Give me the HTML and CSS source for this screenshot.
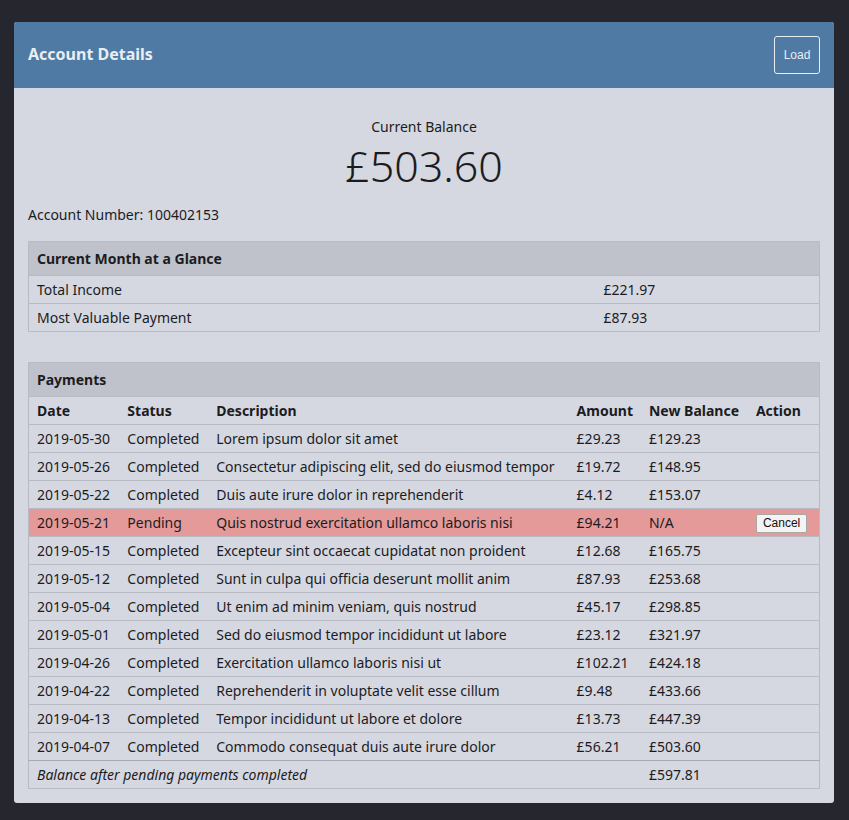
FILE: index.html
```html
<!DOCTYPE html>
<html>
<head>
<meta charset="utf-8">
<link rel="stylesheet" href="styles.css">
</head>
<body>
<div class="card">
  <div class="card-header">
    <h1 class="title">Account Details</h1>
    <button class="load-btn">Load</button>
  </div>
  <div class="card-body">
    <div class="balance">
      <div class="balance-label">Current Balance</div>
      <div class="balance-value">£503.60</div>
    </div>
    <div class="account-number">Account Number: 100402153</div>

    <table class="tbl glance">
      <thead>
        <tr><th colspan="2" class="caption">Current Month at a Glance</th></tr>
      </thead>
      <tbody>
        <tr><td class="g-label">Total Income</td><td>£221.97</td></tr>
        <tr><td class="g-label">Most Valuable Payment</td><td>£87.93</td></tr>
      </tbody>
    </table>

    <table class="tbl payments">
      <thead>
        <tr><th colspan="6" class="caption">Payments</th></tr>
        <tr class="cols">
          <th class="c-date">Date</th>
          <th class="c-status">Status</th>
          <th class="c-desc">Description</th>
          <th class="c-amt">Amount</th>
          <th class="c-bal">New Balance</th>
          <th class="c-act">Action</th>
        </tr>
      </thead>
      <tbody>
        <tr><td>2019-05-30</td><td>Completed</td><td>Lorem ipsum dolor sit amet</td><td>£29.23</td><td>£129.23</td><td></td></tr>
        <tr><td>2019-05-26</td><td>Completed</td><td>Consectetur adipiscing elit, sed do eiusmod tempor</td><td>£19.72</td><td>£148.95</td><td></td></tr>
        <tr><td>2019-05-22</td><td>Completed</td><td>Duis aute irure dolor in reprehenderit</td><td>£4.12</td><td>£153.07</td><td></td></tr>
        <tr class="pending"><td>2019-05-21</td><td>Pending</td><td>Quis nostrud exercitation ullamco laboris nisi</td><td>£94.21</td><td>N/A</td><td><button class="cancel-btn">Cancel</button></td></tr>
        <tr><td>2019-05-15</td><td>Completed</td><td>Excepteur sint occaecat cupidatat non proident</td><td>£12.68</td><td>£165.75</td><td></td></tr>
        <tr><td>2019-05-12</td><td>Completed</td><td>Sunt in culpa qui officia deserunt mollit anim</td><td>£87.93</td><td>£253.68</td><td></td></tr>
        <tr><td>2019-05-04</td><td>Completed</td><td>Ut enim ad minim veniam, quis nostrud</td><td>£45.17</td><td>£298.85</td><td></td></tr>
        <tr><td>2019-05-01</td><td>Completed</td><td>Sed do eiusmod tempor incididunt ut labore</td><td>£23.12</td><td>£321.97</td><td></td></tr>
        <tr><td>2019-04-26</td><td>Completed</td><td>Exercitation ullamco laboris nisi ut</td><td>£102.21</td><td>£424.18</td><td></td></tr>
        <tr><td>2019-04-22</td><td>Completed</td><td>Reprehenderit in voluptate velit esse cillum</td><td>£9.48</td><td>£433.66</td><td></td></tr>
        <tr><td>2019-04-13</td><td>Completed</td><td>Tempor incididunt ut labore et dolore</td><td>£13.73</td><td>£447.39</td><td></td></tr>
        <tr><td>2019-04-07</td><td>Completed</td><td>Commodo consequat duis aute irure dolor</td><td>£56.21</td><td>£503.60</td><td></td></tr>
      </tbody>
      <tfoot>
        <tr><td colspan="4" class="foot-label">Balance after pending payments completed</td><td>£597.81</td><td></td></tr>
      </tfoot>
    </table>
  </div>
</div>
</body>
</html>
```

FILE: styles.css
```css
html, body {
  margin: 0;
  padding: 0;
}
body {
  background: #25262e;
  font-family: "Noto Sans", "DejaVu Sans", sans-serif;
  font-size: 14px;
  color: #1c1c1e;
  padding: 22px 15px 17px 14px;
}
.card {
  width: 820px;
  background: #d5d8e1;
  border-radius: 3px;
  overflow: hidden;
}
.card-header {
  height: 66px;
  background: #4e7aa3;
  display: flex;
  align-items: center;
  justify-content: space-between;
  padding: 0 14px 1px 14px;
  box-sizing: border-box;
}
.title {
  margin: 0 0 1px 0;
  font-size: 16px;
  font-weight: 700;
  color: #e9eef5;
}
.load-btn {
  width: 46px;
  height: 38px;
  background: transparent;
  border: 1px solid #e9eef5;
  border-radius: 3px;
  color: #e9eef5;
  font-family: "Liberation Sans", Arial, sans-serif;
  font-size: 12px;
  padding: 0;
}
.card-body {
  padding: 29px 14px 14px 14px;
}
.balance {
  text-align: center;
}
.balance-label {
  font-size: 14px;
  line-height: 20px;
}
.balance-value {
  font-size: 43px;
  font-weight: 300;
  line-height: 58px;
}
.account-number {
  margin-top: 10px;
  line-height: 20px;
}
.tbl {
  width: 100%;
  border-collapse: collapse;
  border: 1px solid #b8bbc3;
}
.tbl th, .tbl td {
  text-align: left;
  padding: 0 8px;
  height: 28px;
  border-top: 1px solid #b8bbc3;
  white-space: nowrap;
  box-sizing: border-box;
}
.tbl th {
  font-weight: 700;
}
.tbl th.caption {
  height: 34px;
  background: #bfc2cb;
  border-top: none;
}
.glance {
  margin-top: 16px;
}
.g-label {
  width: 567px;
}
.payments {
  margin-top: 30px;
}
.c-date { width: 91px; }
.c-status { width: 89px; }
.c-desc { width: 361px; }
.c-amt { width: 72px; }
.c-bal { width: 107px; }
.c-act { width: 72px; }
.pending td {
  background: #e59a9a;
}
.cancel-btn {
  font-family: "Liberation Sans", Arial, sans-serif;
  font-size: 12px;
  height: 19px;
  padding: 0 6px;
  background: #f4f4f4;
  border: 1px solid #a8a8a8;
  border-radius: 2px;
  color: #111;
}
.tbl tfoot td {
  border-top: 1px solid #a7aab2;
}
.foot-label {
  font-style: italic;
}
```
